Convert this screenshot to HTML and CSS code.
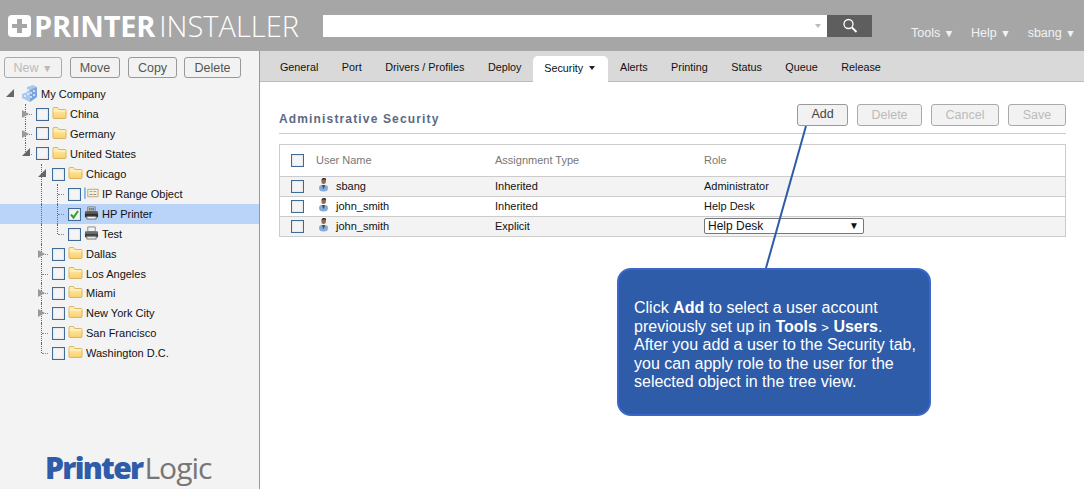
FILE: index.html
```html
<!DOCTYPE html>
<html>
<head>
    <meta charset="UTF-8">
    <title>Printer Installer</title>
    <link rel="stylesheet" href="styles.css">
</head>
<body>
    <svg class="defs" width="0" height="0">
        <defs>
            <linearGradient id="folderFill" x1="0" y1="0" x2="0" y2="1">
                <stop offset="0" stop-color="#fff0b8"/>
                <stop offset="1" stop-color="#fbcf68"/>
            </linearGradient>
            <symbol id="folder" viewBox="0 0 15 13">
                <path d="M1 3V2q0-1 1-1h3.500l1.500 2h6q1 0 1 1v7q0 1-1 1H2q-1 0-1-1z" fill="url(#folderFill)" stroke="#dcb565"/>
                <path d="M1.500 4.500h12" stroke="#fff6d2"/>
            </symbol>
            <symbol id="printer" viewBox="0 0 16 15">
                <path d="M4 1h8v5H4z" fill="#f2f2f2" stroke="#8a8a8a"/>
                <path d="M1 6.500q0-1 1-1h12q1 0 1 1V12H1z" fill="#6b6f72"/>
                <path d="M1 8.500h14V12H1z" fill="#3d4143"/>
                <path d="M3 11h10v3H3z" fill="#e8e8e8" stroke="#777"/>
            </symbol>
            <symbol id="printerColor" viewBox="0 0 16 15">
                <path d="M4 1h8v5H4z" fill="#eee" stroke="#777"/>
                <path d="M5 2h2v3H5z" fill="#d85050"/>
                <path d="M7 2h2v3H7z" fill="#4fa85a"/>
                <path d="M9 2h2v3H9z" fill="#4a78cc"/>
                <path d="M1 6.500q0-1 1-1h12q1 0 1 1V12H1z" fill="#55595c"/>
                <path d="M1 8.500h14V12H1z" fill="#2c2f31"/>
                <path d="M3 11h10v3H3z" fill="#f2f2f2" stroke="#666"/>
            </symbol>
            <symbol id="user" viewBox="0 0 11 14">
                <path d="M1 10q0-3 3-3h3q3 0 3 3 0 3.500-4.500 3.500T1 10z" fill="#84aad8"/>
                <path d="M4 7h3l-1 3.500H5z" fill="#4b4642"/>
                <path d="M3.500 3q0-3 2.500-3t2 3q0 3-2.500 3T3.500 3z" fill="#8d6b55"/>
                <path d="M3.500 2.500q0-2.500 2.500-2.500t2 2q-2-1-4.500.500z" fill="#37312d"/>
            </symbol>
        </defs>
    </svg>

    <div class="header">
        <div class="logo">
            <svg class="logo-plus" width="23" height="22" viewBox="0 0 23 22">
                <rect width="23" height="22" rx="4" fill="#fff"/>
                <path d="M9 4h5v5h5v4h-5v5H9v-5H4V9h5z" fill="#a6a6a6"/>
            </svg>
            <span class="logo-bold">PRINTER</span><span class="logo-thin">INSTALLER</span>
        </div>
        <div class="search">
            <div class="search-input"><span class="search-caret"></span></div>
            <div class="search-btn">
                <svg width="16" height="16" viewBox="0 0 16 16" fill="none" stroke="#fff">
                    <circle cx="6.500" cy="6" r="4.500" stroke-width="1.300"/>
                    <path d="M10 9.500l4.500 4.500" stroke-width="1.800"/>
                </svg>
            </div>
        </div>
        <div class="nav">
            <span>Tools <small>▼</small></span>
            <span>Help <small>▼</small></span>
            <span>sbang <small>▼</small></span>
        </div>
    </div>

    <div class="page">
        <div class="sidebar">
            <div class="side-buttons">
                <button class="btn off btn-new">New <small>▼</small></button>
                <button class="btn btn-move">Move</button>
                <button class="btn btn-copy">Copy</button>
                <button class="btn btn-del">Delete</button>
            </div>

            <div class="tree">
                <div class="row root tall">
                    <span class="t"><i class="open"></i></span>
                    <svg class="company" width="15" height="17" viewBox="0 0 15 17">
                        <path d="M0 9l5-2V2l6-2 4 2v10l-7 5-8-4z" fill="#a9c8ec"/>
                        <path d="M8 5l7-3v10l-7 5z" fill="#79a6de"/>
                        <path d="M6 4v2M9 7v2M12 5v2M9 11v2M12 9v2M6 8v2M3 10v2" stroke="#eaf2fb" stroke-width="1.500"/>
                    </svg>
                    <span class="label">My Company</span>
                </div>
                <div class="row">
                    <span class="t pass branch"><i class="closed"></i></span>
                    <span class="cb"></span><svg class="ic"><use href="#folder"/></svg><span class="label">China</span>
                </div>
                <div class="row short">
                    <span class="t pass branch"><i class="closed"></i></span>
                    <span class="cb"></span><svg class="ic"><use href="#folder"/></svg><span class="label">Germany</span>
                </div>
                <div class="row tall">
                    <span class="t end"><i class="open"></i></span>
                    <span class="cb"></span><svg class="ic"><use href="#folder"/></svg><span class="label">United States</span>
                </div>
                <div class="row">
                    <span class="t"></span><span class="t pass"><i class="open"></i></span>
                    <span class="cb"></span><svg class="ic"><use href="#folder"/></svg><span class="label">Chicago</span>
                </div>
                <div class="row">
                    <span class="t"></span><span class="t pass"></span><span class="t pass branch"></span>
                    <span class="cb"></span>
                    <svg class="ic" viewBox="0 0 16 14">
                        <path d="M1 1v12" stroke="#58a8e8" stroke-width="1.500"/>
                        <path d="M4 3h11v8H4z" fill="#f6efdc" stroke="#b8a67e"/>
                        <path d="M6 5h3v1H6zM10 5h3v1h-3zM6 8h3v1H6zM10 8h3v1h-3z" fill="#9a927e"/>
                    </svg>
                    <span class="label">IP Range Object</span>
                </div>
                <div class="row selected">
                    <span class="t"></span><span class="t pass"></span><span class="t pass branch"></span>
                    <span class="cb checked">
                        <svg width="11" height="11" viewBox="0 0 11 11" fill="none">
                            <path d="M2 5.500l2.500 3L9 2" stroke="#2aa52a" stroke-width="2"/>
                        </svg>
                    </span>
                    <svg class="ic"><use href="#printerColor"/></svg><span class="label">HP Printer</span>
                </div>
                <div class="row">
                    <span class="t"></span><span class="t pass"></span><span class="t end"></span>
                    <span class="cb"></span><svg class="ic"><use href="#printer"/></svg><span class="label">Test</span>
                </div>
                <div class="row">
                    <span class="t"></span><span class="t pass branch"><i class="closed"></i></span>
                    <span class="cb"></span><svg class="ic"><use href="#folder"/></svg><span class="label">Dallas</span>
                </div>
                <div class="row short">
                    <span class="t"></span><span class="t pass branch"></span>
                    <span class="cb"></span><svg class="ic"><use href="#folder"/></svg><span class="label">Los Angeles</span>
                </div>
                <div class="row">
                    <span class="t"></span><span class="t pass branch"><i class="closed"></i></span>
                    <span class="cb"></span><svg class="ic"><use href="#folder"/></svg><span class="label">Miami</span>
                </div>
                <div class="row">
                    <span class="t"></span><span class="t pass branch"><i class="closed"></i></span>
                    <span class="cb"></span><svg class="ic"><use href="#folder"/></svg><span class="label">New York City</span>
                </div>
                <div class="row">
                    <span class="t"></span><span class="t pass branch"></span>
                    <span class="cb"></span><svg class="ic"><use href="#folder"/></svg><span class="label">San Francisco</span>
                </div>
                <div class="row">
                    <span class="t"></span><span class="t end"></span>
                    <span class="cb"></span><svg class="ic"><use href="#folder"/></svg><span class="label">Washington D.C.</span>
                </div>
            </div>

            <div class="brand"><span class="brand-a">Printer</span><span class="brand-b">Logic</span></div>
        </div>

        <div class="main">
            <div class="tabs">
                <span class="tab">General</span>
                <span class="tab">Port</span>
                <span class="tab">Drivers / Profiles</span>
                <span class="tab">Deploy</span>
                <span class="tab active">Security <b class="tab-caret"></b></span>
                <span class="tab">Alerts</span>
                <span class="tab">Printing</span>
                <span class="tab">Status</span>
                <span class="tab">Queue</span>
                <span class="tab">Release</span>
            </div>

            <div class="content">
                <div class="title-bar">
                    <h2>Administrative Security</h2>
                    <div class="actions">
                        <button class="btn btn-add">Add</button>
                        <button class="btn off btn-a-del">Delete</button>
                        <button class="btn off btn-a-cancel">Cancel</button>
                        <button class="btn off btn-a-save">Save</button>
                    </div>
                </div>

                <div class="table">
                    <div class="tr head">
                        <div class="c-check"><span class="cb"></span></div>
                        <div class="c-user">User Name</div>
                        <div class="c-type">Assignment Type</div>
                        <div class="c-role">Role</div>
                    </div>
                    <div class="tr grey">
                        <div class="c-check"><span class="cb"></span></div>
                        <div class="c-user"><svg class="usr"><use href="#user"/></svg>sbang</div>
                        <div class="c-type">Inherited</div>
                        <div class="c-role">Administrator</div>
                    </div>
                    <div class="tr">
                        <div class="c-check"><span class="cb"></span></div>
                        <div class="c-user"><svg class="usr"><use href="#user"/></svg>john_smith</div>
                        <div class="c-type">Inherited</div>
                        <div class="c-role">Help Desk</div>
                    </div>
                    <div class="tr grey">
                        <div class="c-check"><span class="cb"></span></div>
                        <div class="c-user"><svg class="usr"><use href="#user"/></svg>john_smith</div>
                        <div class="c-type">Explicit</div>
                        <div class="c-role">
                            <div class="select">Help Desk<span class="select-arrow">▼</span></div>
                        </div>
                    </div>
                </div>

                <div class="callout">
                    Click <b>Add</b> to select a user account<br>
                    previously set up in <b>Tools</b> <span class="gt">&gt;</span> <b>Users</b>.<br>
                    After you add a user to the Security tab,<br>
                    you can apply role to the user for the<br>
                    selected object in the tree view.
                </div>
            </div>
        </div>
    </div>

    <!-- pointer from the callout up to the Add button -->
    <svg class="pointer" width="1084" height="489">
        <path d="M806 126L766 268" stroke="#2e5ca8" stroke-width="2"/>
    </svg>
</body>
</html>
```

FILE: styles.css
```css
html, body {
    margin: 0;
    height: 489px;
    overflow: hidden;
}
body {
    font-family: "Liberation Sans", Arial, sans-serif;
    font-size: 11px;
    color: #111;
    background: white;
    display: flex;
    flex-direction: column;
    position: relative;
}
small {
    font-size: 10.500px;
}
.defs {
    position: absolute;
}
.pointer {
    position: absolute;
    left: 0;
    top: 0;
    pointer-events: none;
}

/* header */
.header {
    height: 51px;
    flex: none;
    background: #a6a6a6;
    display: flex;
    box-sizing: border-box;
    padding-left: 8px;
}
.logo {
    width: 315px;
    display: flex;
    align-items: center;
    height: 51px;
    color: white;
    font-family: "Open Sans", sans-serif;
    font-size: 29px;
    white-space: nowrap;
}
.logo-plus {
    margin-right: 3px;
    margin-top: 1px;
}
.logo-bold {
    font-weight: 700;
    letter-spacing: -0.2px;
    margin-right: 4px;
}
.logo-thin {
    font-weight: 300;
}
.search {
    display: flex;
    margin-top: 15px;
    height: 22px;
}
.search-input {
    width: 504px;
    background: white;
    position: relative;
}
.search-caret {
    position: absolute;
    right: 6px;
    top: 9px;
    border-left: 3px solid transparent;
    border-right: 3px solid transparent;
    border-top: 4px solid #bbb;
}
.search-btn {
    width: 45px;
    background: #5e5e5e;
    display: flex;
    align-items: center;
    justify-content: center;
}
.nav {
    display: flex;
    gap: 17px;
    color: #f2f2f2;
    font-size: 12.500px;
    margin-left: 39px;
    margin-top: 26px;
    white-space: nowrap;
}

/* page */
.page {
    flex: 1;
    display: flex;
    min-height: 0;
}
.sidebar {
    width: 259px;
    flex: none;
    background: #f3f3f3;
    border-right: 1px solid #999;
    display: flex;
    flex-direction: column;
}
.btn {
    height: 21px;
    padding: 0;
    font-family: inherit;
    font-size: 12.500px;
    color: #555;
    background: #f2f2f2;
    border: 1px solid #999;
    border-radius: 3px;
    box-sizing: border-box;
}
.btn.off {
    color: #bbb;
    border-color: #aaa;
}
.side-buttons {
    display: flex;
    padding: 6px 0 0 4px;
    height: 21px;
}
.btn-new { width: 58px; }
.btn-move { width: 50px; margin-left: 8px; }
.btn-copy { width: 49px; margin-left: 8px; }
.btn-del { width: 57px; margin-left: 7px; }

/* tree */
.tree {
    margin-top: 5px;
}
.row {
    height: 20px;
    display: flex;
    align-items: center;
    padding-left: 20px;
    white-space: nowrap;
}
.row.short { height: 19px; }
.row.tall { height: 21px; }
.row.root { padding-left: 4px; }
.row.selected {
    background: #b9d3f9;
}
.t {
    width: 16px;
    height: 100%;
    flex: none;
    position: relative;
}
.t.pass::before,
.t.end::before {
    content: "";
    position: absolute;
    left: 5px;
    top: 0;
    bottom: 0;
    border-left: 1px dotted #666;
}
.t.end::before { bottom: 50%; }
.t.branch::after,
.t.end::after {
    content: "";
    position: absolute;
    left: 6px;
    top: 50%;
    width: 6px;
    border-top: 1px dotted #888;
}
.t i {
    position: absolute;
    z-index: 1;
    background: #999;
}
.t i.open {
    left: 2px;
    top: 5px;
    width: 8px;
    height: 8px;
    background: #666;
    clip-path: polygon(100% 0, 100% 100%, 0 100%);
}
.row.root .t i.open { top: 6px; }
.t i.closed {
    left: 2px;
    top: 6px;
    width: 7px;
    height: 8px;
    clip-path: polygon(0 0, 100% 50%, 0 100%);
}
.cb {
    width: 13px;
    height: 13px;
    flex: none;
    box-sizing: border-box;
    display: inline-block;
    border: 1px solid #3f6b96;
    background: #f5f5f5;
    box-shadow: inset 0 0 2px #ccc;
    position: relative;
}
.cb svg {
    display: block;
}
.ic {
    width: 15px;
    height: 14px;
    flex: none;
    margin: -2px 3px 0 3px;
}
.company {
    margin: -1px 4px 0 2px;
}
.brand {
    margin-top: auto;
    padding: 0 0 0 45px;
    height: 36px;
    line-height: 30px;
    font-family: "Open Sans", sans-serif;
    font-size: 30px;
    letter-spacing: -1px;
    white-space: nowrap;
}
.brand-a {
    color: #2e5ca8;
    font-weight: 800;
    letter-spacing: -1.700px;
}
.brand-b {
    color: #777;
    font-weight: 500;
    margin-left: 2px;
}

/* main */
.main {
    flex: 1;
    min-width: 0;
}
.tabs {
    height: 31px;
    box-sizing: border-box;
    background: #d9d9d9;
    border-bottom: 1px solid #bbb;
    display: flex;
    align-items: flex-end;
    padding-left: 8.200px;
}
.tab {
    height: 26px;
    line-height: 24px;
    padding: 0 11.750px;
    font-size: 10.800px;
    color: #111;
    white-space: nowrap;
}
.tab.active {
    background: white;
    border-radius: 5px 5px 0 0;
    height: 26px;
    margin-bottom: -1px;
    padding-right: 13px;
    padding-left: 11px;
}
.tab-caret {
    display: inline-block;
    width: 0;
    height: 0;
    margin-left: 3px;
    vertical-align: 2px;
    border-left: 3.500px solid transparent;
    border-right: 3.500px solid transparent;
    border-top: 4px solid #222;
}
.content {
    padding: 22px 18px 0 19px;
}
.title-bar {
    height: 29px;
    display: flex;
    justify-content: space-between;
    border-bottom: 1px solid #ccc;
}
h2 {
    margin: 0;
    padding-top: 7px;
    font-size: 12px;
    line-height: 16px;
    letter-spacing: 1.150px;
    color: #5a6a85;
}
.actions {
    display: flex;
    height: 22px;
}
.actions .btn { height: 22px; }
.btn-add { width: 51px; color: #444; padding-bottom: 3px; }
.btn-a-del { width: 65px; margin-left: 9px; }
.btn-a-cancel { width: 68px; margin-left: 9px; }
.btn-a-save { width: 58px; margin-left: 9px; }

.table {
    margin-top: 10px;
    border: 1px solid #ccc;
    border-bottom: none;
}
.tr {
    height: 20px;
    display: flex;
    align-items: center;
    border-bottom: 1px solid #ccc;
    box-sizing: border-box;
}
.tr.head {
    height: 32px;
    color: #777;
}
.tr.grey {
    background: #f3f3f3;
}
.c-check {
    width: 36px;
    padding-left: 11px;
    box-sizing: border-box;
    display: flex;
}
.c-user {
    width: 179px;
    display: flex;
    align-items: center;
    margin-top: -2px;
    white-space: nowrap;
}
.tr.head .c-user {
    margin-top: -1px;
}
.c-type {
    width: 209px;
    margin-top: -1px;
}
.c-role {
    flex: 1;
    margin-top: -1px;
}
.usr {
    width: 11px;
    height: 14px;
    margin: -2px 7px 0 2px;
    flex: none;
}
.select {
    width: 160px;
    height: 16px;
    box-sizing: border-box;
    border: 1px solid #777;
    border-radius: 2px;
    background: white;
    font-size: 12px;
    line-height: 14px;
    padding-left: 3px;
    display: flex;
    justify-content: space-between;
}
.select-arrow {
    font-size: 10px;
    padding-right: 4px;
}
.callout {
    width: 314px;
    height: 148px;
    box-sizing: border-box;
    margin: 31px 0 0 338px;
    padding: 29px 0 0 15px;
    background: #2e5ca8;
    border: 2px solid #3d66c9;
    border-radius: 14px;
    color: white;
    font-size: 16px;
    line-height: 18.500px;
    white-space: nowrap;
}
.gt {
    font-size: 13px;
    line-height: 1;
}
```
